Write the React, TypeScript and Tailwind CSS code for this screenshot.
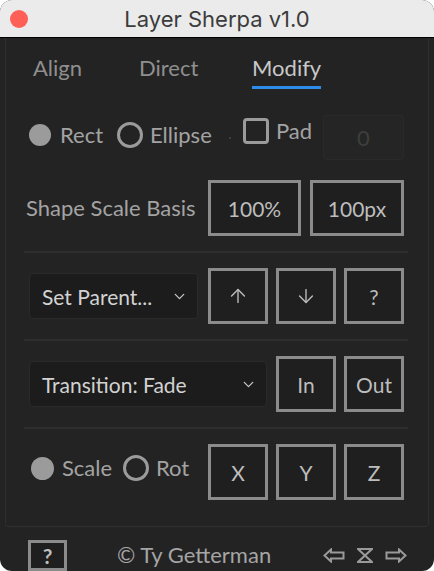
import { ArrowDown, ArrowUp, ChevronDown } from 'lucide-react';
import clsx from 'clsx';
import type { ReactNode } from 'react';

type BoxProps = {
  className?: string;
  children?: ReactNode;
};

// square outlined button used all over the panel
const Box = ({ className, children }: BoxProps) => (
  <div
    className={clsx(
      'flex shrink-0 items-center justify-center border-[3px] border-[#8b8b8b] bg-[#1f1f1f] text-[21px] leading-none text-[#bdbdbd]',
      className
    )}
  >
    {children}
  </div>
);

const Select = ({ className, label }: { className?: string; label: string }) => (
  <div
    className={clsx(
      'flex h-[46px] shrink-0 items-center justify-between rounded-[4px] border border-[#2a2a2a] bg-[#1c1c1c] pl-[12px] pr-[9px] text-[21px] text-[#d2d2d2]',
      className
    )}
  >
    <span className="leading-none">{label}</span>
    <ChevronDown size={17} strokeWidth={1.8} className="text-[#c8c8c8]" />
  </div>
);

const Divider = () => <div className="mt-[15px] h-[2px] w-[384px] bg-[#2e2e2e]" />;

const Dot = () => <div className="h-[22px] w-[22px] shrink-0 rounded-full bg-[#9b9b9b]" />;
const Ring = () => <div className="h-[26px] w-[26px] shrink-0 rounded-full border-[3px] border-[#9b9b9b]" />;

export default function App() {
  return (
    <div className="h-[571px] w-[434px] bg-white [font-family:Lato,'Open_Sans',sans-serif]">
      <div className="flex h-full flex-col overflow-hidden rounded-[12px] bg-[#232323]">
        {/* title bar */}
        <div className="flex h-[38px] shrink-0 items-center border-b border-black bg-[#ebebeb]">
          <div className="ml-[10px] h-[18px] w-[18px] rounded-full bg-[#fe5f57]" />
          <span className="mr-[28px] flex-1 text-center text-[22px] leading-none text-[#3c3c3c] [font-family:Inter,sans-serif]">
            Layer Sherpa v1.0
          </span>
        </div>

        {/* panel */}
        <div className="mx-[5px] h-[489px] shrink-0 rounded-b-[4px] border-x border-b border-[#2f2f2f] pl-[18px] pr-[20px]">
          <div className="flex h-[52px] pl-[9px] text-[22px] leading-[24px]">
            <div className="w-[106px] pt-[18px] text-[#8f8f8f]">Align</div>
            <div className="w-[113px] pt-[18px] text-[#8f8f8f]">Direct</div>
            <div className="flex flex-col items-start pt-[18px] text-[#c8c8c8]">
              <span>Modify</span>
              <div className="mt-[6px] h-[3px] w-full bg-[#2d8cea]" />
            </div>
          </div>

          {/* shape type + pad */}
          <div className="mt-[25px] flex h-[45px] items-start text-[22px] text-[#a3a3a3]">
            <div className="ml-[5px] mt-[8px] flex h-[24px] items-center">
              <Dot />
              <span className="ml-[9px] w-[57px] leading-none">Rect</span>
              <Ring />
              <span className="ml-[7px] w-[79px] leading-none">Ellipse</span>
              <div className="mt-[6px] h-[2px] w-[2px] bg-[#3c3c3c]" />
            </div>
            <div className="ml-[12px] mt-[2px] flex h-[28px] items-center">
              <div className="h-[26px] w-[26px] shrink-0 rounded-[4px] border-[3px] border-[#9b9b9b]" />
              <span className="ml-[7px] w-[47px] leading-none">Pad</span>
            </div>
            <div className="flex h-[45px] w-[81px] items-center justify-center rounded-[3px] border border-[#2a2a2a] bg-[#252525] text-[#3e3e3e]">
              0
            </div>
          </div>

          {/* scale basis */}
          <div className="mt-[20px] flex h-[56px] items-center text-[22px] text-[#a3a3a3]">
            <span className="ml-[2px] w-[182px] leading-none">Shape Scale Basis</span>
            <Box className="h-[56px] w-[93px]">100%</Box>
            <Box className="ml-[9px] h-[56px] w-[94px]">100px</Box>
          </div>

          <Divider />

          <div className="mt-[15px] flex h-[56px] items-center">
            <Select className="ml-[5px] w-[169px]" label="Set Parent..." />
            <Box className="ml-[10px] h-[56px] w-[60px]">
              <ArrowUp size={22} strokeWidth={1.5} />
            </Box>
            <Box className="ml-[8px] h-[56px] w-[60px]">
              <ArrowDown size={22} strokeWidth={1.5} />
            </Box>
            <Box className="ml-[8px] h-[56px] w-[60px]">?</Box>
          </div>

          <Divider />

          <div className="mt-[15px] flex h-[56px] items-center">
            <Select className="ml-[5px] w-[238px]" label="Transition: Fade" />
            <Box className="ml-[9px] h-[56px] w-[60px]">In</Box>
            <Box className="ml-[8px] h-[56px] w-[60px]">Out</Box>
          </div>

          <Divider />

          {/* scale / rot axis */}
          <div className="mt-[15px] flex h-[56px] items-start text-[22px] text-[#a3a3a3]">
            <div className="ml-[7px] mt-[12px] flex h-[24px] w-[177px] items-center">
              <div className="h-[23px] w-[23px] shrink-0 rounded-full bg-[#9b9b9b]" />
              <span className="ml-[8px] w-[61px] leading-none">Scale</span>
              <Ring />
              <span className="ml-[7px] leading-none">Rot</span>
            </div>
            <Box className="h-[56px] w-[60px]">X</Box>
            <Box className="ml-[8px] h-[56px] w-[60px]">Y</Box>
            <Box className="ml-[8px] h-[56px] w-[60px]">Z</Box>
          </div>
        </div>

        {/* footer */}
        <div className="flex flex-1 items-start pt-[13px] text-[22px] text-[#a5a5a5]">
          <Box className="ml-[28px] h-[31px] w-[39px] text-[19px] font-bold">?</Box>
          <span className="ml-[50px] mt-[3px] leading-[24px]">© Ty Getterman</span>
          <div className="ml-auto mr-[27px] mt-[8px] flex items-center gap-[12px] text-[#9a9a9a]">
            <svg width="22" height="15" viewBox="0 0 22 15" fill="none" stroke="currentColor" strokeWidth="2" strokeLinejoin="miter">
              <path d="M1.5 7.5 L8 1.5 V4.5 H20.5 V10.5 H8 V13.5 Z" />
            </svg>
            <svg width="16" height="15" viewBox="0 0 16 15" fill="none" stroke="currentColor" strokeWidth="2">
              <path d="M1 1 H15 L1 14 H15 Z" />
            </svg>
            <svg width="22" height="15" viewBox="0 0 22 15" fill="none" stroke="currentColor" strokeWidth="2" strokeLinejoin="miter">
              <path d="M20.5 7.5 L14 1.5 V4.5 H1.5 V10.5 H14 V13.5 Z" />
            </svg>
          </div>
        </div>
      </div>
    </div>
  );
}
